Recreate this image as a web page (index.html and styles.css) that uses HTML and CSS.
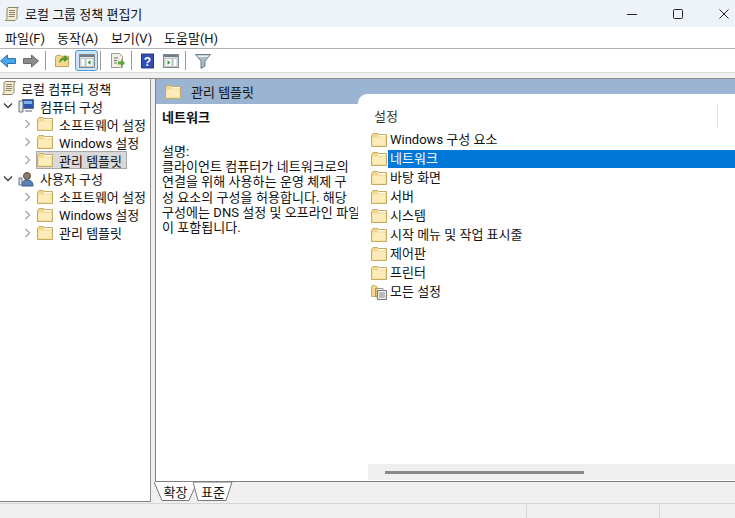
FILE: index.html
```html
<!DOCTYPE html>
<html lang="ko">
<head>
<meta charset="utf-8">
<title>로컬 그룹 정책 편집기</title>
<link rel="stylesheet" href="styles.css">
</head>
<body>
<svg class="defs" width="0" height="0">
  <defs>
    <symbol id="folder" viewBox="0 0 16 16">
      <path d="M.5 3.5V14.5H15.5V2.5H7.5L6.5 1.5H2L.5 3.5Z" fill="#f3d78e" stroke="#c8ab63"/>
      <path d="M1.5 5.5H14.5V13.5H1.5Z" fill="#fcecb9"/>
      <path d="M7.5 3H14.5V4.5H7Z" fill="#fffdf4"/>
    </symbol>
    <symbol id="scroll" viewBox="0 0 16 16">
      <path d="M4 1.5H14.5L13 3V12.5L11 14.5H1.5L3 12.5V3Z" fill="#f4ecd2" stroke="#8e8468"/>
      <path d="M5 4.5H11M5 6.5H11M5 8.5H11M4.5 10.5H10.5" stroke="#8e8468"/>
    </symbol>
    <symbol id="chev-r" viewBox="0 0 8 10"><path d="M1.5 1L5.5 5L1.5 9" fill="none" stroke="#a6a6a6" stroke-width="1.3"/></symbol>
    <symbol id="chev-d" viewBox="0 0 10 8"><path d="M1 1.5L5 5.5L9 1.5" fill="none" stroke="#404040" stroke-width="1.4"/></symbol>
  </defs>
</svg>
<div class="window">
  <header class="titlebar">
    <svg class="ico16"><use href="#scroll"/></svg>
    <span class="title-text">로컬 그룹 정책 편집기</span>
    <div class="winctl">
      <svg class="ctl" viewBox="0 0 12 12"><path d="M1 6.5H11" stroke="#222" stroke-width="1"/></svg>
      <svg class="ctl" viewBox="0 0 12 12"><rect x="1.5" y="1.5" width="9" height="9" rx="1" fill="none" stroke="#222"/></svg>
      <svg class="ctl" viewBox="0 0 12 12"><path d="M1.5 1.5L10.5 10.5M10.5 1.5L1.5 10.5" stroke="#222"/></svg>
    </div>
  </header>
  <nav class="menubar">
    <span class="menu m1">파일(F)</span>
    <span class="menu m2">동작(A)</span>
    <span class="menu m3">보기(V)</span>
    <span class="menu">도움말(H)</span>
  </nav>
  <div class="toolbar">
    <svg class="tool t-back" viewBox="0 0 16 14"><path d="M.5 7L7.5 1V4.5H15.5V9.5H7.5V13Z" fill="#4aa5e6" stroke="#2577b8"/></svg>
    <svg class="tool t-fwd" viewBox="0 0 16 14"><path d="M15.5 7L8.5 1V4.5H.5V9.5H8.5V13Z" fill="#8d8d8d" stroke="#6a6a6a"/></svg>
    <i class="tsep s1"></i>
    <svg class="tool t-up" viewBox="0 0 16 16"><path d="M.5 4.5V14.5H14.5V3.5H7L6 2.5H2Z" fill="#f6d98c" stroke="#b99a52"/><path d="M5 10C5 6 7 5 10 5V3L14 6L10 9V7C8 7 6 8 5 10Z" fill="#4fa52f" stroke="#2f7a1a" stroke-width=".6"/></svg>
    <span class="tool-active">
      <svg class="tool-inner" viewBox="0 0 16 14"><rect x=".5" y=".5" width="15" height="13" fill="#e6e6e6" stroke="#7f8a92"/><path d="M1 1H15V3H1Z" fill="#6f7d88"/><path d="M2 4.5H6V12.5H2Z" fill="#fff" stroke="#93a0aa" stroke-width=".6"/><path d="M7 4.5H14V12.5H7Z" fill="#fff" stroke="#93a0aa" stroke-width=".6"/><path d="M11.5 6V11L8.5 8.5Z" fill="#3d9b3d"/></svg>
    </span>
    <i class="tsep s2"></i>
    <svg class="tool t-exp" viewBox="0 0 16 16"><path d="M2.5 .5H10.5L13.5 3.5V14.5H2.5Z" fill="#f3efe3" stroke="#9a9a9a"/><path d="M5 5H9M5 7.5H8M5 10H8" stroke="#6d6d6d"/><path d="M9 8.5H12V6L16 10L12 14V11.5H9Z" fill="#57ad38"/></svg>
    <i class="tsep s3"></i>
    <svg class="tool t-help" viewBox="0 0 14 16"><rect x=".5" y=".5" width="13" height="15" fill="#2f4fb5" stroke="#1f2f80"/><text class="help-q" x="7" y="13" text-anchor="middle">?</text></svg>
    <svg class="tool t-prop" viewBox="0 0 16 14"><rect x=".5" y=".5" width="15" height="13" fill="#e6e6e6" stroke="#7f8a92"/><path d="M1 1H15V3H1Z" fill="#6f7d88"/><path d="M2 4.5H9V12.5H2Z" fill="#fff" stroke="#93a0aa" stroke-width=".6"/><path d="M10 4.5H14V12.5H10Z" fill="#fff" stroke="#93a0aa" stroke-width=".6"/><path d="M4.5 6V11L7.5 8.5Z" fill="#3d9b3d"/></svg>
    <i class="tsep s4"></i>
    <svg class="tool t-filter" viewBox="0 0 16 16"><path d="M.5 1.5H15.5L10 8V13L6 15.5V8Z" fill="#a9bcc9" stroke="#6b7d88"/><path d="M2 2.5H14L12.5 4H3.5Z" fill="#e8eef2"/></svg>
  </div>
  <div class="gapline"></div>
  <main class="panes">
    <aside class="tree">
      <div class="node root"><svg class="ico16"><use href="#scroll"/></svg><span>로컬 컴퓨터 정책</span></div>
      <div class="node lvl1">
        <svg class="chev-d"><use href="#chev-d"/></svg>
        <svg class="ico16" viewBox="0 0 16 16"><rect x="4.5" y="1.5" width="11" height="9" fill="#2a55b0" stroke="#5b6d80"/><path d="M6 3H14V6H6Z" fill="#7ab0ee"/><path d="M1 3H5V14H1Z" fill="#dfe4ea" stroke="#6a7684"/><path d="M7 12H14V14H7Z" fill="#aab4be"/></svg>
        <span>컴퓨터 구성</span>
      </div>
      <div class="node lvl2"><svg class="chev-r"><use href="#chev-r"/></svg><svg class="ico16"><use href="#folder"/></svg><span class="lbl">소프트웨어 설정</span></div>
      <div class="node lvl2"><svg class="chev-r"><use href="#chev-r"/></svg><svg class="ico16"><use href="#folder"/></svg><span class="lbl">Windows 설정</span></div>
      <div class="node lvl2"><svg class="chev-r"><use href="#chev-r"/></svg><span class="sel"><svg class="ico16"><use href="#folder"/></svg><span class="lbl">관리 템플릿</span></span></div>
      <div class="node lvl1">
        <svg class="chev-d"><use href="#chev-d"/></svg>
        <svg class="ico16" viewBox="0 0 16 16"><circle cx="9" cy="5" r="3.5" fill="#8a7a6a" stroke="#5a5048"/><path d="M4 15C4 10 6 9 9 9S15 10 15 15Z" fill="#5b80b5" stroke="#3c5a88"/><path d="M1 7V14H4V7Z" fill="#d6dde6" stroke="#6a7684"/></svg>
        <span>사용자 구성</span>
      </div>
      <div class="node lvl2"><svg class="chev-r"><use href="#chev-r"/></svg><svg class="ico16"><use href="#folder"/></svg><span class="lbl">소프트웨어 설정</span></div>
      <div class="node lvl2"><svg class="chev-r"><use href="#chev-r"/></svg><svg class="ico16"><use href="#folder"/></svg><span class="lbl">Windows 설정</span></div>
      <div class="node lvl2"><svg class="chev-r"><use href="#chev-r"/></svg><svg class="ico16"><use href="#folder"/></svg><span class="lbl">관리 템플릿</span></div>
    </aside>
    <div class="splitter"></div>
    <section class="content">
      <div class="ext">
        <div class="desc-col">
          <div class="band"><svg class="ico16"><use href="#folder"/></svg><span>관리 템플릿</span></div>
          <div class="desc">
            <h2 class="desc-title">네트워크</h2>
            <p class="desc-text">설명:<br>클라이언트 컴퓨터가 네트워크로의<br>연결을 위해 사용하는 운영 체제 구<br>성 요소의 구성을 허용합니다. 해당<br>구성에는 DNS 설정 및 오프라인 파일<br>이 포함됩니다.</p>
          </div>
        </div>
        <div class="list-col">
          <div class="list-card">
            <div class="list-head"><span>설정</span><i class="col-sep"></i></div>
            <ul class="list">
              <li class="row"><svg class="ico16"><use href="#folder"/></svg><span class="name">Windows 구성 요소</span></li>
              <li class="row on"><svg class="ico16"><use href="#folder"/></svg><span class="name">네트워크</span></li>
              <li class="row"><svg class="ico16"><use href="#folder"/></svg><span class="name">바탕 화면</span></li>
              <li class="row"><svg class="ico16"><use href="#folder"/></svg><span class="name">서버</span></li>
              <li class="row"><svg class="ico16"><use href="#folder"/></svg><span class="name">시스템</span></li>
              <li class="row"><svg class="ico16"><use href="#folder"/></svg><span class="name">시작 메뉴 및 작업 표시줄</span></li>
              <li class="row"><svg class="ico16"><use href="#folder"/></svg><span class="name">제어판</span></li>
              <li class="row"><svg class="ico16"><use href="#folder"/></svg><span class="name">프린터</span></li>
              <li class="row"><svg class="ico16" viewBox="0 0 16 16"><path d="M.5 3V12.5H6V2.5H5L4 1.5H1.5Z" fill="#f3d78e" stroke="#c8ab63"/><path d="M6.5 6.5H15.5V15.5H6.5Z" fill="#eee" stroke="#777"/><path d="M4.5 4.5H12V6.5M4.5 4.5V13H6.5" fill="none" stroke="#999"/><path d="M8 9H14M8 11H14M8 13H14" stroke="#888"/></svg><span class="name">모든 설정</span></li>
            </ul>
            <div class="hscroll"><i class="thumb"></i></div>
          </div>
        </div>
      </div>
      <div class="tabs">
        <div class="tab tab1"><svg class="tab-bg" viewBox="0 0 43 19"><path d="M0 0L8 18.5H35L43 0" fill="#fff" stroke="#777"/></svg><span>확장</span></div>
        <div class="tab tab2"><svg class="tab-bg" viewBox="0 0 40 19"><path d="M0 0L5 18.5H33L39 0Z" fill="#fff" stroke="#777"/></svg><span>표준</span></div>
      </div>
    </section>
  </main>
  <footer class="status">
    <i class="st st1"></i><i class="st st2"></i><i class="st st3"></i>
  </footer>
</div>
</body>
</html>
```

FILE: styles.css
```css
* { box-sizing: border-box; }
html, body { margin: 0; padding: 0; }
body { width: 735px; height: 518px; overflow: hidden; background: #fff; font-family: Roboto, "Noto Sans CJK KR", sans-serif; font-size: 13px; color: #111; }
.defs { display: block; height: 0; }
.window { width: 735px; height: 518px; display: flex; flex-direction: column; }
.ico16 { width: 16px; height: 16px; flex: none; display: block; }

.titlebar { height: 27px; flex: none; background: #eef2f9; display: flex; align-items: center; padding-left: 4px; }
.title-text { margin-left: 5px; font-size: 13px; }
.winctl { margin-left: auto; display: flex; align-items: center; gap: 34px; padding-right: 5px; }
.ctl { width: 12px; height: 12px; display: block; }

.menubar { height: 22px; flex: none; background: #fff; border-bottom: 1px solid #b2b2b2; display: flex; align-items: center; padding-left: 5px; }
.menu { white-space: nowrap; }
.m1 { width: 52px; } .m2 { width: 54px; } .m3 { width: 53px; }

.toolbar { height: 23px; flex: none; background: #fff; display: flex; align-items: center; }
.tool { display: block; flex: none; }
.t-back { width: 16px; height: 14px; }
.t-fwd { width: 16px; height: 14px; margin-left: 7px; }
.tsep { display: block; flex: none; width: 1px; height: 19px; background: #9a9a9a; }
.s1 { margin-left: 6px; }
.t-up { width: 15px; height: 15px; margin-left: 9px; }
.tool-active { flex: none; width: 23px; height: 21px; margin-left: 5px; background: #cce4f7; border: 1px solid #4a9bd8; border-radius: 3px; display: flex; align-items: center; justify-content: center; }
.tool-inner { width: 16px; height: 14px; display: block; }
.s2 { margin-left: 2px; }
.t-exp { width: 16px; height: 16px; margin-left: 8px; }
.s3 { margin-left: 6px; }
.t-help { width: 13px; height: 16px; margin-left: 9px; }
.help-q { font-family: "Liberation Sans", sans-serif; font-size: 13px; font-weight: 700; fill: #fff; }
.t-prop { width: 16px; height: 14px; margin-left: 9px; }
.s4 { margin-left: 6px; }
.t-filter { width: 16px; height: 16px; margin-left: 9px; }

.gapline { height: 7px; flex: none; background: #f0f0f0; border-top: 1px solid #dcdcdc; border-bottom: 1px solid #8a8a8a; }

.panes { flex: 1; min-height: 0; display: flex; background: #f0f0f0; }
.tree { width: 151px; flex: none; height: 423px; background: #fff; border-bottom: 1px solid #808080; border-right: 1px solid #909090; }
.node { height: 18.1px; display: flex; align-items: center; white-space: nowrap; }
.root { padding-left: 1px; gap: 4px; }
.lvl1 { padding-left: 3px; }
.lvl1 .chev-d { width: 10px; height: 8px; flex: none; margin-right: 5px; }
.lvl1 span { margin-left: 6px; }
.lvl2 { padding-left: 24px; }
.chev-r { width: 8px; height: 10px; flex: none; margin-right: 5px; }
.lbl { margin-left: 6px; }
.sel { display: flex; align-items: center; height: 18px; padding-right: 4px; margin-left: -1px; background: #d9d9d9; border: 1px solid #a8a8a8; }

.splitter { width: 4px; flex: none; background: #f0f0f0; }

.content { flex: 1; min-width: 0; display: flex; flex-direction: column; }
.ext { height: 403px; flex: none; display: flex; background: #fff; border-left: 1px solid #808080; border-bottom: 1px solid #808080; }
.desc-col { width: 202px; flex: none; display: flex; flex-direction: column; }
.band { height: 25px; background: #9ab4d1; display: flex; align-items: center; padding-left: 9px; gap: 10px; }
.desc { padding: 5px 0 0 6px; width: 210px; }
.desc-title { margin: 0; font-size: 13px; font-weight: 700; line-height: 18px; }
.desc-text { margin: 17px 0 0; line-height: 15.2px; letter-spacing: .05px; white-space: nowrap; }
.list-col { flex: 1; min-width: 0; background: #9ab4d1; }
.list-card { background: #fff; border-top-left-radius: 9px; margin-top: 15px; height: calc(100% - 15px); padding-left: 10px; display: flex; flex-direction: column; }
.list-head { height: 36px; flex: none; padding: 12px 0 0 6px; display: flex; color: #333; }
.col-sep { margin-left: auto; margin-right: 17px; width: 1px; height: 24px; margin-top: -2px; background: #e2e2e2; }
.list { list-style: none; margin: 0; padding: 0; flex: 1; }
.row { height: 19px; display: flex; align-items: center; padding-left: 3px; white-space: nowrap; }
.name { margin-left: 1px; padding-left: 2px; flex: 1; height: 18px; line-height: 17px; }
.row.on .name { background: #0078d7; color: #fff; }
.hscroll { height: 16px; flex: none; background: #efefef; padding: 7px 0 0 17px; margin-bottom: 1px; }
.thumb { display: block; width: 199px; height: 3px; background: #888; }

.tabs { height: 19px; flex: none; display: flex; background: #f0f0f0; }
.tab { position: relative; height: 19px; display: flex; align-items: center; justify-content: center; color: #111; }
.tab span { position: relative; }
.tab-bg { position: absolute; left: 0; top: 0; width: 100%; height: 100%; display: block; }
.tab1 { width: 43px; margin-left: -1px; }
.tab2 { width: 40px; margin-left: -4px; }

.status { height: 15px; flex: none; background: #efefef; border-top: 1px solid #d6d6d6; display: flex; }
.st { display: block; flex: none; width: 1px; background: #d6d6d6; margin-top: 1px; }
.st1 { margin-left: 526px; }
.st2 { margin-left: 132px; }
.st3 { display: none; }
```
